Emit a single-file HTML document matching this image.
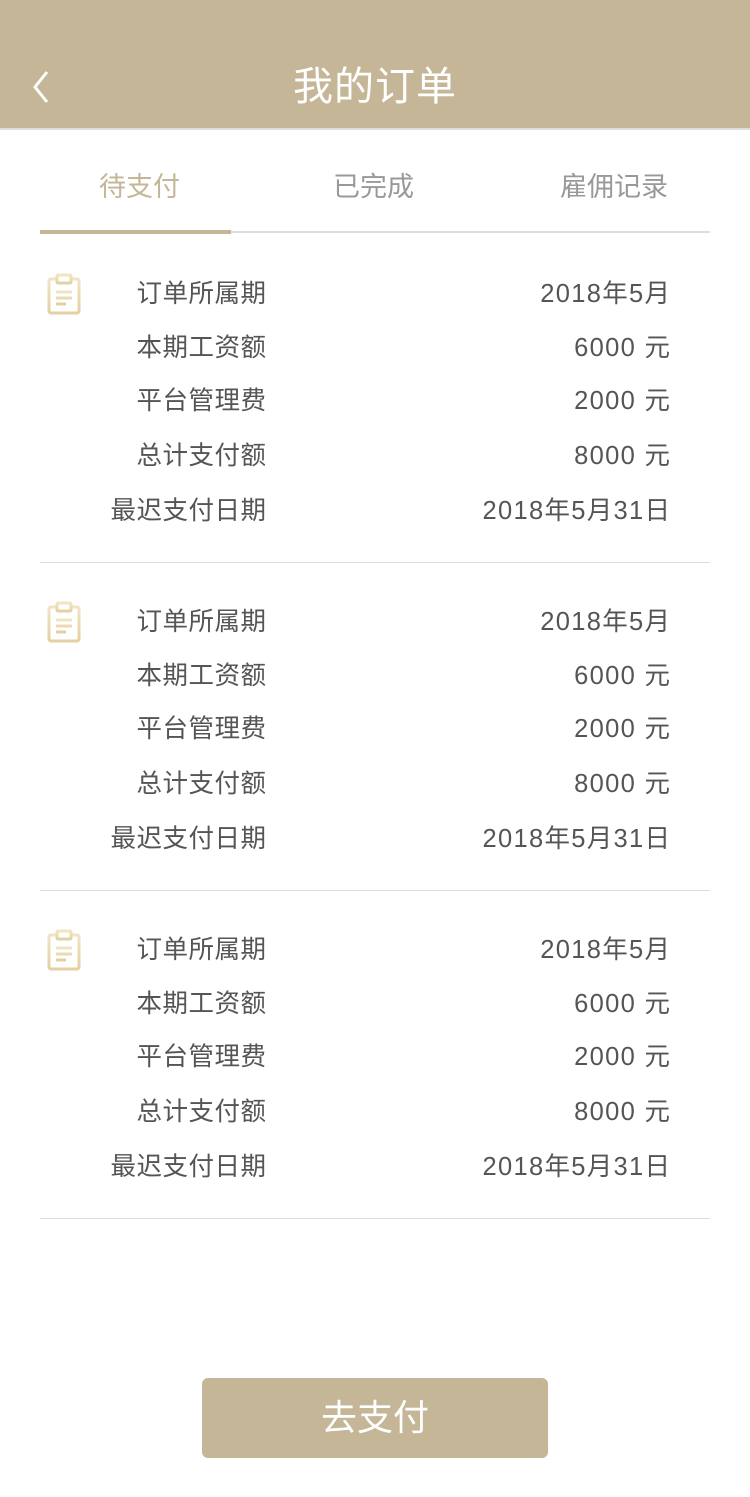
<!DOCTYPE html>
<html><head><meta charset="utf-8"><style>
*{margin:0;padding:0;box-sizing:border-box}
body{width:750px;height:1497px;background:#fff;font-family:"Liberation Sans","Noto Sans CJK SC",sans-serif;position:relative;overflow:hidden}
.hd{position:absolute;left:0;top:0;width:750px;height:130px;background:#c4b696;border-bottom:2px solid #ddd}
.hd .t{position:absolute;left:0;width:750px;top:63px;text-align:center;color:#fff;font-size:40px;line-height:48px;letter-spacing:1px}
.tab{position:absolute;top:170px;font-size:27px;line-height:34px;color:#999}
.ul{position:absolute;top:231px;left:40px;width:670px;height:2px;background:#ddd}
.ul2{position:absolute;top:230px;left:40px;width:191px;height:4px;background:#c4b696}
.card{position:absolute;left:0;width:750px;height:328px}
.row{position:absolute;left:0;width:750px;font-size:25.5px;line-height:32px;color:#555}
.row .l{position:absolute;right:484px;white-space:nowrap;letter-spacing:0.5px;margin-right:-0.5px}
.row .v{position:absolute;right:80px;white-space:nowrap;letter-spacing:1.3px;margin-right:-1.3px}
.sep{position:absolute;left:40px;width:670px;height:1px;background:#ddd;top:290px}
.ic{position:absolute;left:47px;top:1px}
.btn{position:absolute;left:202px;top:1378px;width:346px;height:80px;background:#c4b696;border-radius:6px;color:#fff;font-size:36px;text-align:center;line-height:80px}
</style></head><body>
<div class="hd">
<svg style="position:absolute;left:30px;top:70px" width="22" height="34" viewBox="0 0 22 34"><path d="M17 2 L5 17 L17 32" stroke="#fff" stroke-width="3" fill="none"/></svg>
<div class="t">我的订单</div>
</div>
<div class="tab" style="left:99px;color:#c4b696">待支付</div>
<div class="tab" style="left:333px">已完成</div>
<div class="tab" style="left:560px">雇佣记录</div>
<div class="ul"></div><div class="ul2"></div>

<div class="card" style="top:272px">
<svg class="ic" width="34" height="42" viewBox="0 0 34 42"><defs><linearGradient id="g" x1="0" y1="0" x2="0" y2="1"><stop offset="0" stop-color="#f1e4c3"/><stop offset="1" stop-color="#e4d0a0"/></linearGradient></defs><rect x="2" y="6" width="30" height="34" rx="2" fill="none" stroke="url(#g)" stroke-width="3"/><rect x="10" y="2" width="14" height="8" rx="1" fill="#fff" stroke="url(#g)" stroke-width="3"/><path d="M9 19H25M9 25H25M9 31H19" stroke="url(#g)" stroke-width="3"/></svg>
<div class="row" style="top:6px"><span class="l">订单所属期</span><span class="v">2018年5月</span></div>
<div class="row" style="top:60px"><span class="l">本期工资额</span><span class="v">6000 元</span></div>
<div class="row" style="top:113px"><span class="l">平台管理费</span><span class="v">2000 元</span></div>
<div class="row" style="top:168px"><span class="l">总计支付额</span><span class="v">8000 元</span></div>
<div class="row" style="top:223px"><span class="l">最迟支付日期</span><span class="v">2018年5月31日</span></div>
<div class="sep"></div>
</div>
<div class="card" style="top:600px">
<svg class="ic" width="34" height="42" viewBox="0 0 34 42"><rect x="2" y="6" width="30" height="34" rx="2" fill="none" stroke="url(#g)" stroke-width="3"/><rect x="10" y="2" width="14" height="8" rx="1" fill="#fff" stroke="url(#g)" stroke-width="3"/><path d="M9 19H25M9 25H25M9 31H19" stroke="url(#g)" stroke-width="3"/></svg>
<div class="row" style="top:6px"><span class="l">订单所属期</span><span class="v">2018年5月</span></div>
<div class="row" style="top:60px"><span class="l">本期工资额</span><span class="v">6000 元</span></div>
<div class="row" style="top:113px"><span class="l">平台管理费</span><span class="v">2000 元</span></div>
<div class="row" style="top:168px"><span class="l">总计支付额</span><span class="v">8000 元</span></div>
<div class="row" style="top:223px"><span class="l">最迟支付日期</span><span class="v">2018年5月31日</span></div>
<div class="sep"></div>
</div>
<div class="card" style="top:928px">
<svg class="ic" width="34" height="42" viewBox="0 0 34 42"><rect x="2" y="6" width="30" height="34" rx="2" fill="none" stroke="url(#g)" stroke-width="3"/><rect x="10" y="2" width="14" height="8" rx="1" fill="#fff" stroke="url(#g)" stroke-width="3"/><path d="M9 19H25M9 25H25M9 31H19" stroke="url(#g)" stroke-width="3"/></svg>
<div class="row" style="top:6px"><span class="l">订单所属期</span><span class="v">2018年5月</span></div>
<div class="row" style="top:60px"><span class="l">本期工资额</span><span class="v">6000 元</span></div>
<div class="row" style="top:113px"><span class="l">平台管理费</span><span class="v">2000 元</span></div>
<div class="row" style="top:168px"><span class="l">总计支付额</span><span class="v">8000 元</span></div>
<div class="row" style="top:223px"><span class="l">最迟支付日期</span><span class="v">2018年5月31日</span></div>
<div class="sep"></div>
</div>
<div class="btn">去支付</div>
</body></html>
